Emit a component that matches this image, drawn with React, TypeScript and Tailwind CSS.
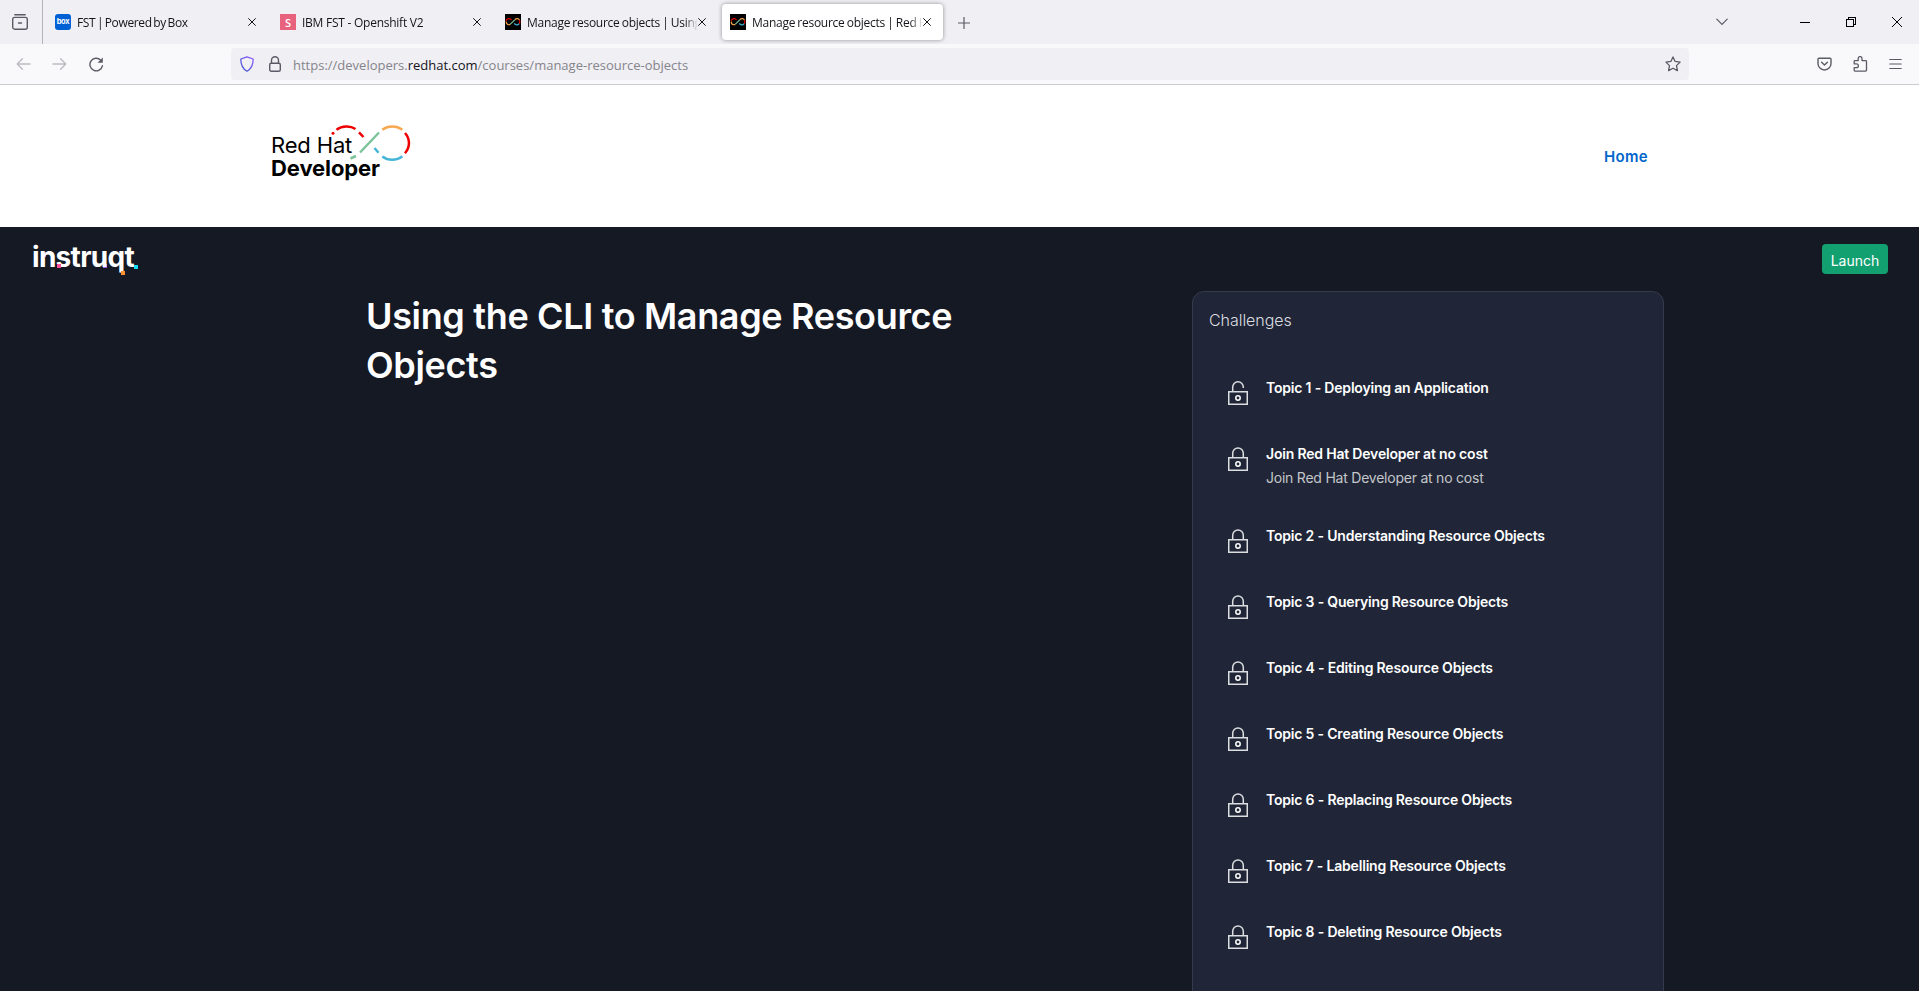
import React from "react";

type Tab = { title: string; icon: React.ReactNode; active?: boolean; spacing: string };

const challenges: { title: string; description?: string; open?: boolean }[] = [
  { title: "Topic 1 - Deploying an Application", open: true },
  { title: "Join Red Hat Developer at no cost", description: "Join Red Hat Developer at no cost" },
  { title: "Topic 2 - Understanding Resource Objects" },
  { title: "Topic 3 - Querying Resource Objects" },
  { title: "Topic 4 - Editing Resource Objects" },
  { title: "Topic 5 - Creating Resource Objects" },
  { title: "Topic 6 - Replacing Resource Objects" },
  { title: "Topic 7 - Labelling Resource Objects" },
  { title: "Topic 8 - Deleting Resource Objects" },
];

function InfinityFavicon() {
  return (
    <svg width="16" height="16" viewBox="0 0 16 16" fill="none" strokeWidth="1.2" className="shrink-0">
      <rect width="16" height="16" fill="#000" />
      <path d="M1.2 7C1.500 4.200 5 3.800 6.600 6" stroke="#e00" />
      <path d="M1.200 7.500C1 10.300 3.600 11.500 5.400 10.200" stroke="#f5a04a" />
      <path d="M5.400 10.200L10 5.600" stroke="#7dc39a" />
      <path d="M10 5.600C11.200 4.200 13.600 4.400 14.500 6.200" stroke="#f5a04a" />
      <path d="M14.500 6.200c.5 1.200.4 2.500-.3 3.400" stroke="#e00" />
      <path d="M14.200 9.600c-1.300 1.900-3.800 1.600-5-.2" stroke="#3badd0" />
    </svg>
  );
}

function CloseIcon() {
  return (
    <svg width="8" height="8" viewBox="0 0 8 8" stroke="#15141a" strokeWidth="1" className="shrink-0">
      <path d="M.3.3l7.4 7.4M7.7.3L.3 7.7" />
    </svg>
  );
}

const tabs: Tab[] = [
  {
    title: "FST | Powered by Box",
    spacing: "tracking-[-0.35px] [word-spacing:-1.2px]",
    icon: (
      <span className="flex h-4 w-4 shrink-0 items-center justify-center rounded-[3px] bg-[#0061d5] font-['Inter',sans-serif] text-[7.5px] leading-none font-bold tracking-[-0.3px] text-white">
        box
      </span>
    ),
  },
  {
    title: "IBM FST - Openshift V2",
    spacing: "tracking-[-0.25px]",
    icon: (
      <span className="flex h-4 w-4 shrink-0 items-center justify-center bg-[#e9627d] font-['Open_Sans',sans-serif] text-[11px] leading-none font-semibold text-white">
        S
      </span>
    ),
  },
  { title: "Manage resource objects | Using", spacing: "tracking-[-0.27px] [word-spacing:-0.6px]", icon: <InfinityFavicon /> },
  { title: "Manage resource objects | Red H", spacing: "tracking-[-0.27px] [word-spacing:-0.6px]", icon: <InfinityFavicon />, active: true },
];

function BrowserTab({ tab }: { tab: Tab }) {
  return (
    <div
      className={
        tab.active
          ? "flex h-9 w-[221px] shrink-0 items-center rounded-[4px] bg-white pl-2 shadow-[0_0_4px_rgba(0,0,0,0.4)]"
          : "flex h-9 w-[221px] shrink-0 items-center pl-2"
      }
    >
      {tab.icon}
      <span
        className={`mt-px ml-1.5 w-[171px] shrink-0 [mask-image:linear-gradient(to_right,#000_158px,transparent_171px)] text-[12px] leading-5 whitespace-nowrap text-[#15141a] ${tab.spacing}`}
      >
        {tab.title}
      </span>
      <CloseIcon />
    </div>
  );
}

function TabBar() {
  return (
    <div className="flex h-11 items-center bg-[#f0eff4]">
      <div className="flex h-11 w-[43px] shrink-0 items-center border-r border-[#b5b4ba] pl-3">
        <svg width="16" height="16" viewBox="0 0 16 16" fill="none" stroke="#5b5b66" strokeWidth="1.4" strokeLinecap="round">
          <path d="M2.8.7h10.4M6.5 9h3" />
          <rect x=".7" y="3.400" width="14.600" height="11.800" rx="2" />
        </svg>
      </div>
      <div className="ml-1 flex gap-1">
        {tabs.map((tab) => (
          <BrowserTab key={tab.title} tab={tab} />
        ))}
      </div>
      <svg width="12" height="12" viewBox="0 0 12 12" stroke="#5b5b66" strokeWidth="1.200" className="mt-px ml-[15px]">
        <path d="M6 0v12M0 6h12" />
      </svg>
      <div className="ml-auto flex items-center pr-[17px]">
        <svg width="12" height="8" viewBox="0 0 12 8" fill="none" stroke="#5b5b66" strokeWidth="1.200" strokeLinecap="round" className="mr-[72px]">
          <path d="M.8 1.200L6 6.400l5.200-5.200" />
        </svg>
        <div className="mr-9 h-px w-2.5 bg-black" />
        <svg width="10" height="10" viewBox="0 0 10 10" fill="none" stroke="#000" className="mr-9" shapeRendering="crispEdges">
          <path d="M.5 2.500h7v7h-7zM2.500 2.500v-2h7v7h-2" />
        </svg>
        <svg width="10" height="10" viewBox="0 0 10 10" stroke="#000">
          <path d="M0 0l10 10M10 0L0 10" />
        </svg>
      </div>
    </div>
  );
}

function Toolbar() {
  return (
    <div className="flex h-[41px] items-center border-b border-[#ccccd0] bg-[#f9f9fb]">
      <div className="flex w-[231px] shrink-0 items-center gap-[21px] pl-4">
        <svg width="15" height="14" viewBox="0 0 15 14" fill="none" stroke="#bcbcc2" strokeWidth="1.400" strokeLinecap="round" strokeLinejoin="round">
          <path d="M14 7H1.200M6.400 1.800L1.200 7l5.200 5.200" />
        </svg>
        <svg width="15" height="14" viewBox="0 0 15 14" fill="none" stroke="#bcbcc2" strokeWidth="1.400" strokeLinecap="round" strokeLinejoin="round">
          <path d="M1 7h12.800M8.600 1.800L13.800 7l-5.200 5.200" />
        </svg>
        <svg width="15" height="15" viewBox="0 0 15 15" fill="none" stroke="#5b5b66" strokeWidth="1.400" strokeLinecap="round" className="ml-px">
          <path d="M13.400 8.800A6.300 6.300 0 1 1 11.600 3" />
          <path d="M13.800.6v5.200H8.600z" fill="#5b5b66" stroke="none" />
        </svg>
      </div>
      <div className="flex h-8 w-[1458px] shrink-0 items-center rounded-[4px] bg-[#f0eff4] pl-[9px]">
        <svg width="14" height="16" viewBox="0 0 14 16" fill="none" strokeWidth="1.300" strokeLinejoin="round">
          <defs>
            <linearGradient id="shield" x1="0" y1="1" x2="1" y2="0">
              <stop offset="0" stopColor="#3a55d0" />
              <stop offset="1" stopColor="#9059ff" />
            </linearGradient>
          </defs>
          <path d="M7 .8L13.200 3c0 5.400-1.400 9.600-6.200 12.200C2.200 12.600.8 8.400.8 3z" stroke="url(#shield)" />
        </svg>
        <svg width="12" height="16" viewBox="0 0 12 16" fill="none" stroke="#5b5b66" strokeWidth="1.400" className="ml-[15px]">
          <rect x=".7" y="7.200" width="10.600" height="8" rx="1.500" />
          <path d="M2.500 7V4.200a3.500 3.500 0 0 1 7 0V7" />
        </svg>
        <span className="mt-0.5 ml-3 text-[13px] leading-5 whitespace-nowrap text-[#85848b]">
          https://developers.<span className="text-[#15141a]">redhat.com</span>/courses/manage-resource-objects
        </span>
        <svg width="16" height="16" viewBox="0 0 16 16" fill="none" stroke="#5b5b66" strokeWidth="1.300" strokeLinejoin="round" className="mr-2 ml-auto">
          <path d="M8 .9l2.100 4.500 5 .7-3.600 3.500.9 5L8 12.200l-4.400 2.400.9-5L.9 6.100l5-.7z" />
        </svg>
      </div>
      <div className="ml-auto flex items-center gap-[21px] pr-[17px]">
        <svg width="15" height="14" viewBox="0 0 15 14" fill="none" stroke="#5b5b66" strokeWidth="1.400" strokeLinecap="round" strokeLinejoin="round">
          <path d="M2 1.200h11a1 1 0 0 1 1 1V6.500a6.500 6.500 0 0 1-13 0V2.200a1 1 0 0 1 1-1z" />
          <path d="M4.600 5.200L7.500 8l2.900-2.800" />
        </svg>
        <svg width="15" height="16" viewBox="0 0 15 16" fill="none" stroke="#5b5b66" strokeWidth="1.300" strokeLinejoin="round">
          <path d="M2 4.600h3.200V2.500a1.900 1.900 0 0 1 3.800 0V4.600h3.700a.8.800 0 0 1 .8.800V14.300a.8.800 0 0 1-.8.800H2a.8.800 0 0 1-.8-.8v-2.600h2.300a1.900 1.900 0 0 0 0-3.800H1.200V5.400A.8.800 0 0 1 2 4.600z" />
        </svg>
        <svg width="13" height="12" viewBox="0 0 13 12" stroke="#5b5b66" strokeWidth="1.200" strokeLinecap="round">
          <path d="M.8 1.500h11.400M.8 6h11.400M.8 10.500h11.400" />
        </svg>
      </div>
    </div>
  );
}

function RedHatLogo() {
  return (
    <div className="relative mt-[39px] ml-[271px] h-[60px] w-[140px] font-['Inter',sans-serif] text-black">
      <div className="pt-2.5 text-[22px] leading-[23px] tracking-[-0.15px] whitespace-nowrap">Red Hat</div>
      <div className="text-[22px] leading-[23px] font-bold tracking-[-0.1px] whitespace-nowrap">Developer</div>
      <svg width="80" height="38" viewBox="331 124 80 38" fill="none" strokeWidth="2.500" className="absolute top-0 left-[60px]">
        <circle cx="333" cy="133.300" r="1.500" fill="#e00" />
        <path d="M336.500 129.800C342 125.700 350 125.400 355.500 129" stroke="#e00" />
        <path d="M359 132.300l4.500 4.700" stroke="#e00" />
        <path d="M350.500 158.500l5.500-2.500M360 152.500L379 132.500" stroke="#7dc39a" />
        <path d="M382.300 129.800C388 125.500 396.500 125.500 402.300 129.800" stroke="#f8a850" />
        <path d="M405 133C410.300 139 410.300 147 405 153.200" stroke="#e00" />
        <path d="M402.300 156.300C396.500 161 388 161 382.300 156.600M378.500 152.700l-4-4.700" stroke="#45b5d8" />
      </svg>
    </div>
  );
}

function InstruqtLogo() {
  return (
    <div className="relative ml-8 h-10 w-[108px] font-['Inter',sans-serif] text-white">
      <span className="absolute top-[15px] left-[9px] h-[5px] w-[5px] bg-[#9b5de5]" />
      <span className="absolute top-[27px] left-[71px] h-[4px] w-[4px] bg-[#9b5de5]" />
      <div className="relative text-[28px] leading-[40px] font-bold tracking-[-0.700px] whitespace-nowrap">instruqt</div>
      <span className="absolute top-[27px] left-[25px] h-1 w-1 bg-[#ff4f9a]" />
      <span className="absolute top-[34px] left-[89px] h-1 w-1 bg-[#ff9130]" />
      <span className="absolute top-[28px] left-[102px] h-1 w-1 bg-[#12dcf8]" />
    </div>
  );
}

function LockIcon({ open }: { open?: boolean }) {
  return (
    <svg width="20" height="24" viewBox="0 0 20 24" fill="none" stroke="#dcdde0" strokeWidth="1.500" className="shrink-0">
      <rect x=".75" y="10.750" width="18.500" height="12.500" />
      <path d={open ? "M4.700 10.500V6.200a5.300 5.300 0 0 1 10.600-.2v1" : "M4.700 10.500V6.200a5.300 5.300 0 0 1 10.600 0v4.300"} />
      <circle cx="10" cy="17" r="2.200" stroke="#fff" />
    </svg>
  );
}

export default function App() {
  return (
    <div className="flex h-[991px] w-[1919px] flex-col overflow-hidden bg-[#151924] font-['Open_Sans',sans-serif]">
      <TabBar />
      <Toolbar />
      <header className="flex h-[142px] shrink-0 justify-between bg-white">
        <RedHatLogo />
        <a className="mt-[62px] mr-[271px] font-['Inter',sans-serif] text-[15px] leading-5 font-semibold tracking-[0.3px] text-[#0066cc]">Home</a>
      </header>
      <div className="flex h-16 shrink-0 items-start justify-between">
        <div className="mt-2.5">
          <InstruqtLogo />
        </div>
        <button className="mt-[17px] mr-[31px] flex h-[30px] w-[66px] items-center justify-center rounded-[4px] bg-[#12a070] pt-0.5 font-['Inter',sans-serif] text-[14px] text-white">
          Launch
        </button>
      </div>
      <main className="flex min-h-0 flex-1 font-['Inter',sans-serif]">
        <h1 className="mt-px ml-[366px] w-[640px] text-[36px] leading-[49px] font-semibold tracking-[-0.340px] text-white">
          Using the CLI to Manage Resource
          <br />
          Objects
        </h1>
        <section className="ml-[186px] h-[760px] w-[472px] rounded-xl border border-[#353b4b] bg-[#202637]">
          <h2 className="mt-4 ml-4 text-[16px] leading-6 font-light tracking-[-0.05px] text-[#dcdde0]">Challenges</h2>
          <ul className="mt-[38px] ml-[35px]">
            {challenges.map((c) => (
              <li key={c.title} className={c.description ? "flex h-[82px] items-start pt-[11px]" : "flex h-[66px] items-start pt-[11px]"}>
                <LockIcon open={c.open} />
                <div className="-mt-[5px] ml-[18px] text-[14px] leading-6 whitespace-nowrap">
                  <p className="font-semibold tracking-[-0.190px] text-white">{c.title}</p>
                  {c.description && <p className="tracking-[-0.230px] text-[#c4c6ca]">{c.description}</p>}
                </div>
              </li>
            ))}
          </ul>
        </section>
      </main>
    </div>
  );
}
